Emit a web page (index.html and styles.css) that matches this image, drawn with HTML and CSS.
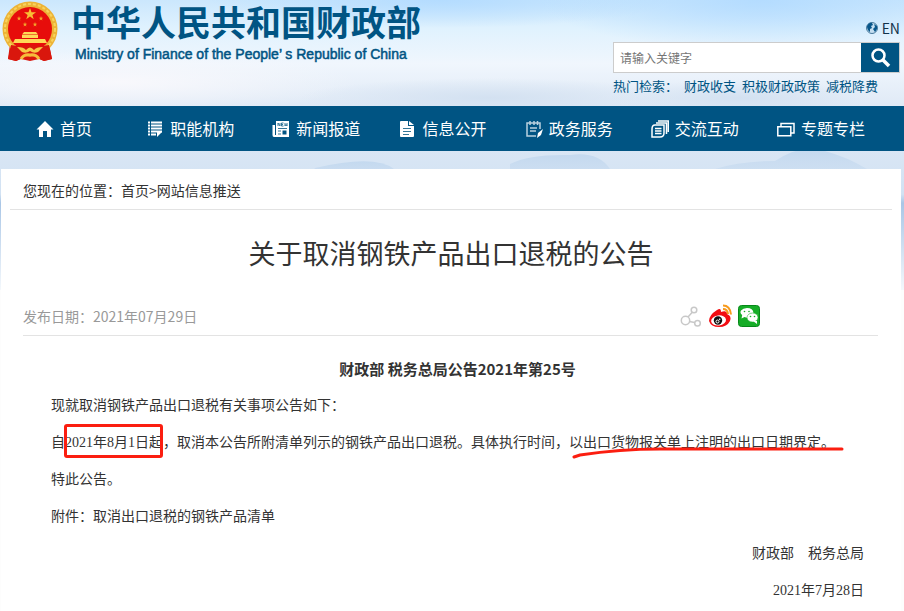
FILE: index.html
```html
<!doctype html>
<html lang="zh-CN">
<head>
  <meta charset="utf-8">
  <meta name="viewport" content="width=device-width, initial-scale=1">
  <title>关于取消钢铁产品出口退税的公告</title>
  <link rel="stylesheet" href="styles.css">
</head>
<body>
<svg class="sky" viewBox="0 0 904 290" preserveAspectRatio="none" aria-hidden="true">
  <defs>
    <linearGradient id="skyFill" x1="0" y1="0" x2="0" y2="1">
      <stop offset="0" stop-color="#cbe7fd"/>
      <stop offset=".1" stop-color="#e0f2fe"/>
      <stop offset=".22" stop-color="#f0f6fd"/>
      <stop offset=".36" stop-color="#e0eaf6"/>
      <stop offset=".67" stop-color="#d2e2f3"/>
      <stop offset=".7" stop-color="#a9c6e6"/>
      <stop offset="1" stop-color="#f4f8fc"/>
    </linearGradient>
    <linearGradient id="hill" x1="0" y1="0" x2="0" y2="1">
      <stop offset="0" stop-color="#c4d9ef"/>
      <stop offset="1" stop-color="#c4d9ef" stop-opacity="0"/>
    </linearGradient>
    <radialGradient id="blue"><stop offset="0" stop-color="#b4dcff"/><stop offset="1" stop-color="#b4dcff" stop-opacity="0"/></radialGradient>
    <radialGradient id="white"><stop offset="0" stop-color="#f8f8fc"/><stop offset="1" stop-color="#f8f8fc" stop-opacity="0"/></radialGradient>
    <radialGradient id="mist"><stop offset="0" stop-color="#d3e1f1"/><stop offset="1" stop-color="#d3e1f1" stop-opacity="0"/></radialGradient>
  </defs>
  <rect width="904" height="290" fill="url(#skyFill)"/>
  <ellipse cx="440" cy="0" rx="230" ry="28" fill="url(#blue)"/>
  <ellipse cx="760" cy="0" rx="220" ry="50" fill="url(#blue)"/>
  <ellipse cx="120" cy="82" rx="240" ry="32" fill="url(#white)"/>
  <ellipse cx="490" cy="98" rx="190" ry="20" fill="url(#mist)"/>
  <ellipse cx="740" cy="98" rx="130" ry="18" fill="url(#mist)"/>
  <path d="M315 168q60-14 79 1v22H300z" fill="url(#hill)"/>
  <path d="M510 164q20-10 60-9q28-4 40 14v22H510z" fill="url(#hill)"/>
  <path d="M715 169q25-8 60-8q28-18 50-10q22 6 42 18v22H715z" fill="url(#hill)"/>
</svg>

<header class="header">
  <a class="brand" href="#">
    <svg class="emblem" viewBox="0 0 56 60" aria-hidden="true">
      <path d="M8 43L6 58l8 2 5-2 9 2 9-2 5 2 8-2-3-15z" fill="#d9170d"/>
      <circle cx="28" cy="28" r="27.500" fill="#edb336"/>
      <circle cx="28" cy="28" r="25" fill="none" stroke="#f8d35d" stroke-width="2" stroke-dasharray="3 2"/>
      <circle cx="28" cy="28" r="22" fill="#e70d0b"/>
      <path d="M28 7l1.500 4.200h4.500l-3.600 2.700 1.300 4.300L28 15.600l-3.700 2.600 1.300-4.300L22 11.200h4.500z" fill="#f8bf35"/>
      <g fill="#f4a52b">
        <path id="star" d="M17 15l.6 1.700h1.700l-1.400 1 .5 1.800-1.400-1-1.400 1 .5-1.800-1.400-1h1.700z"/>
        <use href="#star" x="22"/><use href="#star" x="6" y="6"/><use href="#star" x="16" y="6"/>
      </g>
      <path d="M22 31h12l2 2.500H20zM20 34h16v3H20zM13 38h30l2 4H11z" fill="#ffd957"/>
      <path d="M9 44q9 2 19 0q10 2 19 0l3 14-8 2-6-3q-4-4-8-4t-8 4l-6 3-8-2z" fill="#d9170d"/>
      <path d="M15 46q7 0 9 3q4-5 8 0q2-3 9-3l-5 5q-4 2-8-1q-4 3-8 1z" fill="#f8c845"/>
      <path d="M19 58q3-5 9-4q6-1 9 4" fill="none" stroke="#f6bd3b" stroke-width="3"/>
    </svg>
    <span class="brand-text">
      <span class="brand-cn">中华人民共和国财政部</span>
      <span class="brand-en">Ministry of Finance of the People’ s Republic of China</span>
    </span>
  </a>
  <div class="tools">
    <a class="lang" href="#">
      <svg width="12" height="12" viewBox="0 0 12 12" aria-hidden="true">
        <circle cx="6" cy="6" r="5.500" fill="#c5dff1" stroke="#47799c"/>
        <path d="M1 4q2-4 5-3l1 2-2 1 1 2-2 1v3Q1 8 1 4zM8 2l3 2v3L9 10 7 7l2-2z" fill="#07568a"/>
      </svg>
      EN
    </a>
    <form class="search">
      <input type="text" aria-label="请输入关键字" placeholder="请输入关键字">
      <button type="button" aria-label="搜索">
        <svg width="22" height="22" viewBox="0 0 22 22" fill="none" stroke="#fff" aria-hidden="true">
          <circle cx="9.500" cy="8.500" r="6" stroke-width="2.500"/>
          <path d="M14 13l6 6" stroke-width="3.500"/>
        </svg>
      </button>
    </form>
    <div class="hot">
      <span>热门检索：</span>
      <a href="#">财政收支</a>
      <a href="#">积极财政政策</a>
      <a href="#">减税降费</a>
    </div>
  </div>
</header>

<nav class="nav">
  <a href="#">
    <svg viewBox="0 0 18 18" aria-hidden="true"><path d="M9 1l8.500 8.500H15V17h-4v-6H7v6H3V9.500H.5z" fill="#fff"/></svg>
    首页
  </a>
  <a href="#">
    <svg viewBox="0 0 18 18" aria-hidden="true"><path d="M2 2.500h2m1 0h11M2 5.500h2m1 0h11M2 8.500h2m1 0h11M2 11.500h2m1 0h11M2 14.500h2m1 0h5" stroke="#fff" stroke-width="2"/><path d="M11 12h5l-5 5z" fill="#fff"/></svg>
    职能机构
  </a>
  <a href="#">
    <svg viewBox="0 0 18 18" aria-hidden="true"><path d="M4 1h13v16H2q-1.500 0-1.500-2V5H4z" fill="#fff"/><path d="M3.500 5v10" stroke="#005483"/><path d="M6 6V3l2 3V3m3.500 0H9.500v3h2m-2-1.500h1.500M13 3v3l1-1.500 1 1.500V3M6 8.500h9M6 11h3M6 14h3" fill="none" stroke="#337697"/><path d="M10.500 10.500h4v4h-4z" fill="#005483"/></svg>
    新闻报道
  </a>
  <a href="#">
    <svg viewBox="0 0 18 18" aria-hidden="true"><path d="M2 2q0-1 1-1h7v5h6v10q0 1-1 1H3q-1 0-1-1zM11 1l5 4h-5z" fill="#fff"/><path d="M5 8.500h8M5 11.500h8M5 14.500h6" stroke="#337697"/></svg>
    信息公开
  </a>
  <a href="#">
    <svg viewBox="0 0 18 18" fill="none" stroke="#b9d1df" stroke-width="1.500" aria-hidden="true"><path d="M11 16H2v-3M2 11V3h13v6M5 1v4M9 1v4M12.500 1v4M5 8h7M5 11h6M1 12h2"/><path d="M18 9l-2 6-4 3 1-5z" fill="#fff" stroke="none"/></svg>
    政务服务
  </a>
  <a href="#">
    <svg viewBox="0 0 18 18" fill="none" stroke="#fff" stroke-width="1.500" aria-hidden="true"><path d="M4 5h9v8q0 4-4 4H1V9q0-4 3-4zM5 3h10.500v11M7 1h10.300v11"/><path d="M4 8.500h6.500M4 11h6.500M4 13.500h6.500"/></svg>
    交流互动
  </a>
  <a href="#">
    <svg viewBox="0 0 18 18" fill="none" stroke="#fff" stroke-width="1.500" aria-hidden="true"><path d="M.8 6.800h13v9H.8zM4 6V3.500h13V13h-2.500"/></svg>
    专题专栏
  </a>
</nav>

<main class="page">
  <div class="crumbs">您现在的位置：<a href="#">首页</a>&gt;<a href="#">网站信息推送</a></div>
  <h1>关于取消钢铁产品出口退税的公告</h1>
  <div class="meta">
    <span>发布日期：2021年07月29日</span>
    <div class="share">
      <a href="#" aria-label="分享">
        <svg width="22" height="22" viewBox="0 0 22 22" fill="none" stroke="#c8c8c8" stroke-width="1.500" aria-hidden="true"><circle cx="5.500" cy="15.500" r="4.200"/><circle cx="14" cy="5" r="2.800"/><circle cx="17.500" cy="18.200" r="2.800"/><path d="M8 12l4.500-5M9.500 16.500l5 1"/></svg>
      </a>
      <a href="#" aria-label="微博">
        <svg width="24" height="24" viewBox="0 0 24 24" aria-hidden="true">
          <path d="M9 6q4-3 4 2q6-2 6 2q5 2 3 7q-3 6-11 6T1 17Q1 11 9 6z" fill="#f20d12"/>
          <ellipse cx="10.500" cy="16.500" rx="7.500" ry="5" fill="#fff" transform="rotate(-8 10 16)"/>
          <circle cx="10" cy="16.500" r="4.200" fill="#111"/>
          <circle cx="9.500" cy="17.500" r="1.500" fill="none" stroke="#fff"/><circle cx="11.700" cy="15.300" r=".8" fill="#fff"/>
          <path d="M15 1.500q7 0 8 9M15 5q4.500 0 5 5" fill="none" stroke="#f79a1c" stroke-width="2"/>
        </svg>
      </a>
      <a href="#" aria-label="微信">
        <svg width="22" height="22" viewBox="0 0 22 22" aria-hidden="true">
          <rect x=".5" y=".5" width="21" height="21" rx="3" fill="#16ad27" stroke="#078819"/>
          <path d="M3.500 13.500l.7-3.500Q1.500 8 3 5.500Q5 3 9 3q6 0 6.500 5q-6 0-6 5l-3-1z" fill="#fff"/>
          <ellipse cx="14.500" cy="12.500" rx="5.500" ry="4.500" fill="#fff" stroke="#16ad27" stroke-width=".5"/>
          <path d="M15 16h4v3z" fill="#fff"/>
          <g fill="#16ad27"><circle cx="6.500" cy="6.500" r=".8"/><circle cx="11" cy="6.500" r=".8"/><circle cx="12.500" cy="11.500" r=".8"/><circle cx="16.500" cy="11.500" r=".8"/></g>
        </svg>
      </a>
    </div>
  </div>
  <article class="notice">
    <h2>财政部 税务总局公告2021年第25号</h2>
    <p>现就取消钢铁产品出口退税有关事项公告如下：</p>
    <p>自<span class="boxed">2021年8月1日起</span>，取消本公告所附清单列示的钢铁产品出口退税。具体执行时间，<span class="marked">以出口货物报关单上注明的出口日期界定。<svg viewBox="0 0 272 12" preserveAspectRatio="none" aria-hidden="true"><path d="M2 10L8 8q40-6 80-6H270" fill="none" stroke="#fb1e10" stroke-width="3" stroke-linecap="round"/></svg></span></p>
    <p>特此公告。</p>
    <p>附件：<a href="#">取消出口退税的钢铁产品清单</a></p>
    <p class="sign">财政部　税务总局</p>
    <p class="sign">2021年7月28日</p>
  </article>
</main>
</body>
</html>
```
FILE: styles.css
```css
:root{--blue:#005483;--txt:#333;--line:#e3e3e3;--red:#fb1e10;}
*{box-sizing:border-box;margin:0;padding:0;}
body{font-family:"Noto Sans CJK SC",sans-serif;font-size:14px;color:var(--txt);background:#fdfdfd;position:relative;}
a{color:inherit;text-decoration:none;}
svg{display:block;flex:none;}
.sky{position:absolute;top:0;left:0;width:100%;height:290px;z-index:-1;}

/* header */
.header{display:flex;justify-content:space-between;align-items:flex-start;height:106px;padding:0 4px 0 2px;}
.brand{display:flex;gap:13px;color:var(--blue);}
.emblem{width:56px;height:60px;margin-top:1px;}
.brand-text{display:flex;flex-direction:column;padding-top:4px;white-space:nowrap;font-family:"Liberation Sans","Noto Sans CJK SC",sans-serif;}
.brand-cn{font-size:35px;line-height:40px;font-weight:700;}
.brand-en{font-size:14px;line-height:20px;padding-left:4px;-webkit-text-stroke:.5px var(--blue);}
.tools{width:287px;padding-top:18px;color:var(--blue);}
.lang{display:flex;justify-content:flex-end;align-items:center;gap:4px;font-size:14px;line-height:20px;color:#12324a;}
.search{display:flex;height:31px;margin-top:4px;}
.search input{flex:1;min-width:0;border:1px solid #ccc;border-right:0;background:#fff;padding:0 6px;font:12px "Noto Sans CJK SC",sans-serif;}
.search input::placeholder{color:#757575;}
.search button{width:39px;border:1px solid #ccc;border-left:0;background:var(--blue);display:flex;align-items:center;justify-content:center;}
.hot{display:flex;gap:6px;font-size:13px;line-height:26px;white-space:nowrap;}

/* main menu */
.nav{display:grid;grid-template-columns:repeat(7,1fr);height:45px;padding:0 20px 2px 1px;background:var(--blue);}
.nav a{display:flex;align-items:center;justify-content:center;gap:6px;color:#fff;font-size:16px;white-space:nowrap;}
.nav svg{width:18px;height:18px;margin-top:2px;}

/* article */
.page{margin:18px 3px 0 1px;padding:0 9px 8px;background:#fff;}
.crumbs{line-height:40px;height:41px;padding:1px 13px 0;border-bottom:1px solid var(--line);}
h1{font-size:27px;line-height:40px;font-weight:400;text-align:center;padding:23px 0 25px;}
.meta{display:flex;justify-content:space-between;align-items:center;height:38px;margin:0 14px 0 13px;padding-bottom:2px;border-bottom:1px solid var(--line);color:#999;}
.share{display:flex;align-items:center;gap:6px;margin-right:118px;}
.notice{padding:14px 28px 0 41px;font-family:"Liberation Serif","Noto Sans CJK SC",sans-serif;}
.notice h2{font-family:"Noto Sans CJK SC",sans-serif;font-size:15px;line-height:37px;text-align:center;}
.notice p{line-height:37px;}
.notice .sign{text-align:right;}
.boxed{position:relative;}
.boxed::after{content:"";position:absolute;inset:-11px 0 -8px -1px;border:3px solid var(--red);border-radius:3px;}
.marked{position:relative;white-space:nowrap;}
.marked svg{position:absolute;left:3px;top:12px;width:272px;height:12px;}
```
